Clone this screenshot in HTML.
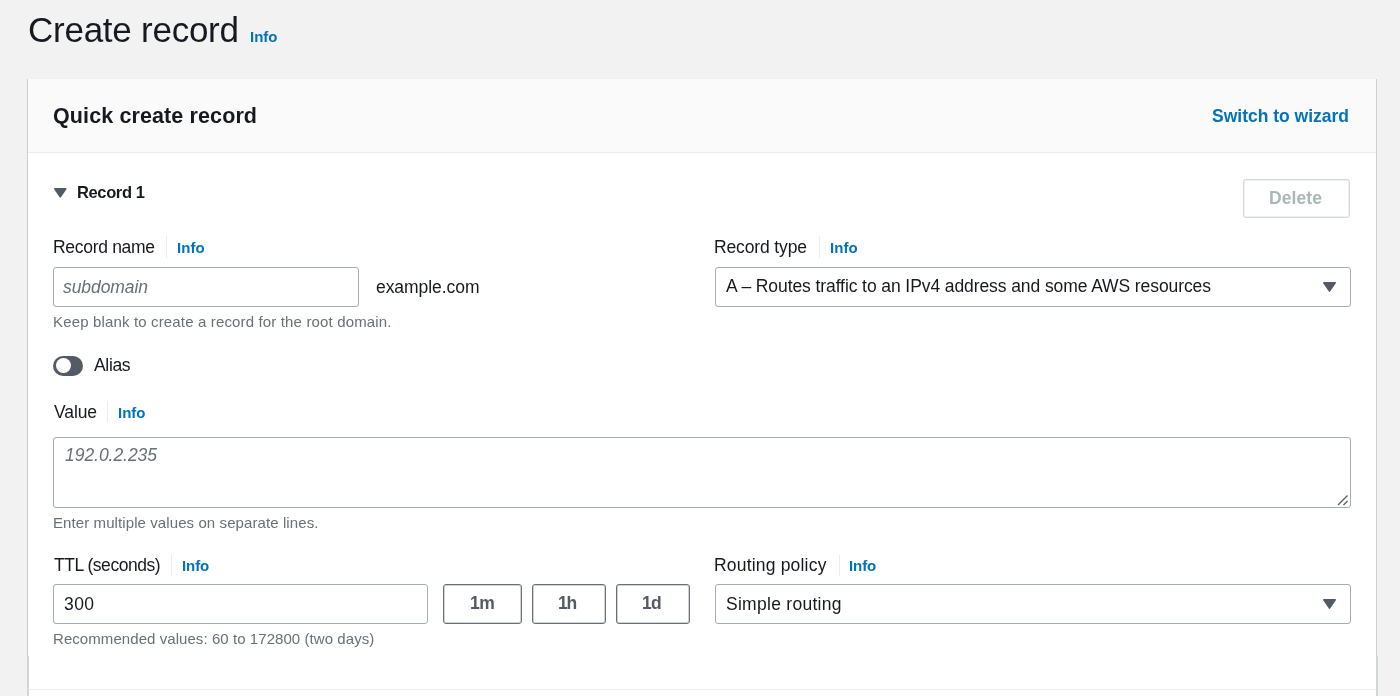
<!DOCTYPE html>
<html><head><meta charset="utf-8"><style>
html,body{margin:0;padding:0;}
body{width:1400px;height:696px;overflow:hidden;position:relative;background:#f2f2f2;font-family:"Liberation Sans",sans-serif;}
.t{position:absolute;white-space:nowrap;will-change:transform;}
</style></head><body>
<div class="t" style="left:27.5px;top:12px;font-size:35px;line-height:35px;font-weight:400;color:#16191f;letter-spacing:-0.249px;">Create record</div>
<div class="t" style="left:250.2px;top:29px;font-size:15px;line-height:15px;font-weight:700;color:#0073bb;letter-spacing:-0.030px;">Info</div>
<div style="position:absolute;left:27px;top:79px;width:1350px;height:681px;box-sizing:border-box;background:#fff;border-left:1px solid #c9cfd1;border-right:1px solid #c9cfd1;"></div>
<div style="position:absolute;left:27px;top:656px;width:2px;height:40px;box-sizing:border-box;background:#d0d5d8;"></div>
<div style="position:absolute;left:1376px;top:656px;width:2px;height:40px;box-sizing:border-box;background:#d0d5d8;"></div>
<div style="position:absolute;left:28px;top:78px;width:1348px;height:75px;box-sizing:border-box;background:#fafafa;border-top:1px solid #eef0f0;border-bottom:1px solid #eaeded;"></div>
<div class="t" style="left:53.3px;top:106px;font-size:21.5px;line-height:21.5px;font-weight:700;color:#16191f;letter-spacing:0.113px;">Quick create record</div>
<div class="t" style="left:1212.2px;top:108px;font-size:17.5px;line-height:17.5px;font-weight:700;color:#0073bb;letter-spacing:-0.006px;">Switch to wizard</div>
<svg style="position:absolute;left:53.6px;top:188.4px;overflow:visible" width="12.6" height="9.8" viewBox="0 0 12.6 9.8"><path d="M0.8 0.8H11.799999999999999L6.3 8.84Z" fill="#545b64" stroke="#545b64" stroke-width="1.6" stroke-linejoin="round"/></svg>
<div class="t" style="left:76.6px;top:184px;font-size:16.5px;line-height:16.5px;font-weight:700;color:#16191f;letter-spacing:-0.373px;">Record 1</div>
<div style="position:absolute;left:1243px;top:179px;width:107px;height:39px;box-sizing:border-box;border:1px solid #d3d9da;border-radius:3px;box-shadow:inset 0 0 0 1px rgba(213,219,219,0.35);"></div>
<div class="t" style="left:1269.0px;top:190px;font-size:17.5px;line-height:17.5px;font-weight:700;color:#aab7b8;letter-spacing:0.095px;">Delete</div>
<div class="t" style="left:52.8px;top:239px;font-size:17.5px;line-height:17.5px;font-weight:400;color:#16191f;letter-spacing:-0.305px;">Record name</div>
<div style="position:absolute;left:166px;top:236px;width:1px;height:22px;box-sizing:border-box;background:#eaeded;"></div>
<div class="t" style="left:176.8px;top:240px;font-size:15px;line-height:15px;font-weight:700;color:#0073bb;letter-spacing:0.037px;">Info</div>
<div style="position:absolute;left:53px;top:267px;width:306px;height:40px;box-sizing:border-box;border:1px solid #a4aeb0;border-radius:3px;"></div>
<div class="t" style="left:62.9px;top:279px;font-size:17.5px;line-height:17.5px;font-weight:400;color:#687078;font-style:italic;letter-spacing:-0.077px;">subdomain</div>
<div class="t" style="left:376.0px;top:279px;font-size:17.5px;line-height:17.5px;font-weight:400;color:#16191f;letter-spacing:-0.057px;">example.com</div>
<div class="t" style="left:52.5px;top:314px;font-size:15px;line-height:15px;font-weight:400;color:#687078;letter-spacing:0.152px;">Keep blank to create a record for the root domain.</div>
<div class="t" style="left:714.4px;top:239px;font-size:17.5px;line-height:17.5px;font-weight:400;color:#16191f;letter-spacing:-0.136px;">Record type</div>
<div style="position:absolute;left:819px;top:236px;width:1px;height:22px;box-sizing:border-box;background:#eaeded;"></div>
<div class="t" style="left:829.5px;top:240px;font-size:15px;line-height:15px;font-weight:700;color:#0073bb;letter-spacing:0.037px;">Info</div>
<div style="position:absolute;left:715px;top:267px;width:636px;height:40px;box-sizing:border-box;border:1px solid #a4aeb0;border-radius:3px;"></div>
<div class="t" style="left:726.0px;top:278px;font-size:17.5px;line-height:17.5px;font-weight:400;color:#16191f;letter-spacing:-0.089px;">A – Routes traffic to an IPv4 address and some AWS resources</div>
<svg style="position:absolute;left:1323px;top:282px;overflow:visible" width="13" height="10" viewBox="0 0 13 10"><path d="M0.8 0.8H12.2L6.5 9.04Z" fill="#545b64" stroke="#545b64" stroke-width="1.6" stroke-linejoin="round"/></svg>
<div style="position:absolute;left:53px;top:356px;width:30px;height:20px;box-sizing:border-box;background:#545b64;border-radius:10px;"></div>
<div style="position:absolute;left:55.8px;top:357.7px;width:15.200000000000003px;height:15.5px;box-sizing:border-box;background:#fff;border-radius:50%;"></div>
<div class="t" style="left:93.5px;top:357px;font-size:17.5px;line-height:17.5px;font-weight:400;color:#16191f;letter-spacing:-0.333px;">Alias</div>
<div class="t" style="left:53.6px;top:404px;font-size:17.5px;line-height:17.5px;font-weight:400;color:#16191f;letter-spacing:-0.115px;">Value</div>
<div style="position:absolute;left:107px;top:401px;width:1px;height:21px;box-sizing:border-box;background:#eaeded;"></div>
<div class="t" style="left:117.6px;top:405px;font-size:15px;line-height:15px;font-weight:700;color:#0073bb;letter-spacing:0.004px;">Info</div>
<div style="position:absolute;left:53px;top:437px;width:1298px;height:71px;box-sizing:border-box;border:1px solid #a4aeb0;border-radius:3px;"></div>
<div class="t" style="left:64.7px;top:447px;font-size:17.5px;line-height:17.5px;font-weight:400;color:#687078;font-style:italic;letter-spacing:-0.045px;">192.0.2.235</div>
<svg style="position:absolute;left:1337px;top:494px" width="12" height="12" viewBox="0 0 12 12"><path d="M1 11L10.5 1.5M6.5 11L10.5 7" stroke="#545b64" stroke-width="1.3" fill="none"/></svg>
<div class="t" style="left:52.5px;top:515px;font-size:15px;line-height:15px;font-weight:400;color:#687078;letter-spacing:0.092px;">Enter multiple values on separate lines.</div>
<div class="t" style="left:53.7px;top:557px;font-size:17.5px;line-height:17.5px;font-weight:400;color:#16191f;letter-spacing:-0.464px;">TTL (seconds)</div>
<div style="position:absolute;left:171px;top:555px;width:1px;height:21px;box-sizing:border-box;background:#eaeded;"></div>
<div class="t" style="left:181.8px;top:558px;font-size:15px;line-height:15px;font-weight:700;color:#0073bb;letter-spacing:-0.096px;">Info</div>
<div style="position:absolute;left:53px;top:584px;width:375px;height:40px;box-sizing:border-box;border:1px solid #a4aeb0;border-radius:3px;"></div>
<div class="t" style="left:63.7px;top:596px;font-size:17.5px;line-height:17.5px;font-weight:400;color:#16191f;letter-spacing:0.400px;">300</div>
<div style="position:absolute;left:443px;top:584px;width:79px;height:40px;box-sizing:border-box;border:1px solid #687076;border-radius:3px;box-shadow:inset 0 0 0 1px rgba(104,112,118,0.3);"></div>
<div class="t" style="left:469.9px;top:595px;font-size:17.5px;line-height:17.5px;font-weight:700;color:#545b64;letter-spacing:-0.493px;">1m</div>
<div style="position:absolute;left:532px;top:584px;width:74px;height:40px;box-sizing:border-box;border:1px solid #687076;border-radius:3px;box-shadow:inset 0 0 0 1px rgba(104,112,118,0.3);"></div>
<div class="t" style="left:558.3px;top:595px;font-size:17.5px;line-height:17.5px;font-weight:700;color:#545b64;letter-spacing:-1.123px;">1h</div>
<div style="position:absolute;left:616px;top:584px;width:74px;height:40px;box-sizing:border-box;border:1px solid #687076;border-radius:3px;box-shadow:inset 0 0 0 1px rgba(104,112,118,0.3);"></div>
<div class="t" style="left:641.7px;top:595px;font-size:17.5px;line-height:17.5px;font-weight:700;color:#545b64;letter-spacing:-0.723px;">1d</div>
<div class="t" style="left:52.5px;top:631px;font-size:15px;line-height:15px;font-weight:400;color:#687078;letter-spacing:0.066px;">Recommended values: 60 to 172800 (two days)</div>
<div class="t" style="left:714.3px;top:557px;font-size:17.5px;line-height:17.5px;font-weight:400;color:#16191f;letter-spacing:0.190px;">Routing policy</div>
<div style="position:absolute;left:839px;top:555px;width:1px;height:21px;box-sizing:border-box;background:#eaeded;"></div>
<div class="t" style="left:849.0px;top:558px;font-size:15px;line-height:15px;font-weight:700;color:#0073bb;letter-spacing:-0.096px;">Info</div>
<div style="position:absolute;left:715px;top:584px;width:636px;height:40px;box-sizing:border-box;border:1px solid #a4aeb0;border-radius:3px;"></div>
<div class="t" style="left:726.0px;top:596px;font-size:17.5px;line-height:17.5px;font-weight:400;color:#16191f;letter-spacing:0.280px;">Simple routing</div>
<svg style="position:absolute;left:1323px;top:599px;overflow:visible" width="13" height="10" viewBox="0 0 13 10"><path d="M0.8 0.8H12.2L6.5 9.04Z" fill="#545b64" stroke="#545b64" stroke-width="1.6" stroke-linejoin="round"/></svg>
<div style="position:absolute;left:28px;top:689px;width:1348px;height:1px;box-sizing:border-box;background:#eaeded;"></div>
</body></html>
